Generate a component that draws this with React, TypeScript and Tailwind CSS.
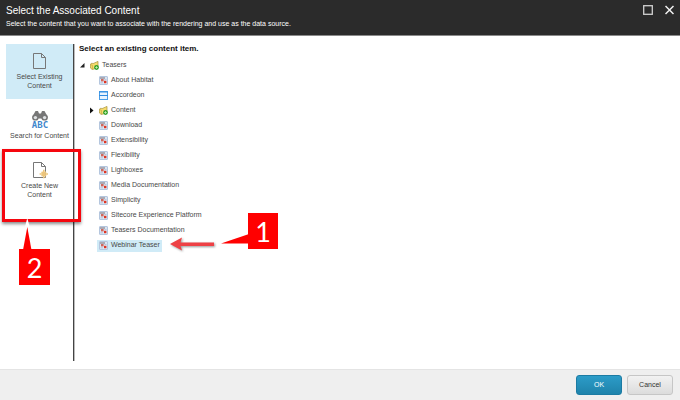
import { useState } from "react";

type IconKind = "folder" | "teaser" | "accordion";

const tabs = [
  { id: "existing", label: "Select Existing Content" },
  { id: "search", label: "Search for Content" },
  { id: "create", label: "Create New Content" },
];

const items: { name: string; icon: IconKind; hasChildren?: boolean }[] = [
  { name: "About Habitat", icon: "teaser" },
  { name: "Accordeon", icon: "accordion" },
  { name: "Content", icon: "folder", hasChildren: true },
  { name: "Download", icon: "teaser" },
  { name: "Extensibility", icon: "teaser" },
  { name: "Flexibility", icon: "teaser" },
  { name: "Lighboxes", icon: "teaser" },
  { name: "Media Documentation", icon: "teaser" },
  { name: "Simplicity", icon: "teaser" },
  { name: "Sitecore Experience Platform", icon: "teaser" },
  { name: "Teasers Documentation", icon: "teaser" },
  { name: "Webinar Teaser", icon: "teaser" },
];

function PageIcon({ starred }: { starred?: boolean }) {
  return (
    <svg width="18" height="18" viewBox="0 0 18 18" fill="none">
      <path d="M2.5 1.5h8l4 4v11h-12z" stroke="#777" />
      <path d="M10.5 1.5v4h4" stroke="#777" />
      {starred && (
        <path
          d="M12.8 8.8v8.4M8.6 13h8.4M10.6 10.8l4.4 4.4M15 10.8l-4.4 4.4"
          stroke="#ecc57c"
          strokeWidth="1.6"
        />
      )}
    </svg>
  );
}

function SearchIcon() {
  return (
    <svg width="20" height="18" viewBox="0 0 20 18">
      <g fill="#777">
        <path d="M5.5 0h2.5l1 2.5h2l1-2.5h2.5l3 5.5v2h-15v-2z" />
        <circle cx="5.4" cy="6.4" r="3.2" />
        <circle cx="14.6" cy="6.4" r="3.2" />
      </g>
      <circle cx="5.4" cy="6.6" r="1.7" fill="#dfe2e4" />
      <circle cx="14.6" cy="6.6" r="1.7" fill="#dfe2e4" />
      <text
        x="10"
        y="17"
        textAnchor="middle"
        fontFamily="DejaVu Sans Mono, monospace"
        fontWeight="bold"
        fontSize="9"
        fill="#3f86cc"
      >
        ABC
      </text>
    </svg>
  );
}

function TreeIcon({ kind }: { kind: IconKind }) {
  if (kind === "folder") {
    return (
      <svg width="9" height="9" viewBox="0 0 9 9">
        <path d="M.4 3.2L2 2l.9.7L8 .4v6L2.4 8.6.4 7z" fill="#f6dc6c" stroke="#a8913c" strokeWidth=".7" />
        <path d="M.6 3.4l1.8 1v4" fill="none" stroke="#b89b3e" strokeWidth=".6" />
        <circle cx="6.5" cy="6.5" r="2.4" fill="#2fa02a" />
        <path d="M5.2 6.5h2.6M6.5 5.2v2.6" stroke="#c9f0b8" strokeWidth=".8" />
      </svg>
    );
  }
  if (kind === "accordion") {
    return (
      <svg width="9" height="9" viewBox="0 0 9 9">
        <rect x=".5" y=".5" width="8" height="8" fill="#e8f4ff" stroke="#4a9ee8" />
        <path d="M0 1h9M0 4.5h9" stroke="#2f8be0" strokeWidth="1.2" />
      </svg>
    );
  }
  return (
    <svg width="9" height="9" viewBox="0 0 9 9">
      <rect x=".5" y=".5" width="8" height="8" rx=".5" fill="#d9e5f4" stroke="#b4c6de" />
      <path d="M1 2h5" stroke="#7d6f74" />
      <path d="M1.5 6.8h2.5M5.5 3.5h2" stroke="#b3bfd0" strokeWidth=".8" />
      <rect x="2" y="3" width="2.6" height="2.4" fill="#d0685c" />
      <rect x="5" y="4.8" width="2.4" height="2.4" fill="#de3524" />
    </svg>
  );
}

export default function App() {
  const [tab, setTab] = useState("existing");
  const [selected, setSelected] = useState("Webinar Teaser");

  return (
    <div className="relative flex min-h-screen flex-col bg-white font-['Liberation_Sans',Arial,sans-serif] text-[7px] text-[#484848]">
      <header className="flex items-start justify-between border-b border-[#8a8a8a] bg-[#2b2b2b] px-1.5 pt-1 pb-[5px] text-white">
        <div>
          <h1 className="text-[10px] leading-[13px]">Select the Associated Content</h1>
          <p className="text-[7px] leading-[13px]">
            Select the content that you want to associate with the rendering and use as the data source.
          </p>
        </div>
        <div className="flex gap-3 pt-px">
          <button aria-label="Maximize">
            <svg width="10" height="10" viewBox="0 0 10 10" fill="none">
              <rect x=".7" y=".7" width="8.6" height="8.6" stroke="#d0d0d0" strokeWidth="1.3" />
            </svg>
          </button>
          <button aria-label="Close">
            <svg width="9" height="10" viewBox="0 0 9 10" fill="none">
              <path d="M.5 1l8 8M8.5 1l-8 8" stroke="#f2f2f2" strokeWidth="1.5" />
            </svg>
          </button>
        </div>
      </header>

      <main className="flex flex-1 pt-2 pb-2 pl-1.5">
        <nav className="flex w-17 shrink-0 flex-col gap-1 border-r border-[#444] shadow-[1px_0_0_#bbb]">
          {tabs.map((t) => (
            <button
              key={t.id}
              onClick={() => setTab(t.id)}
              className={`flex flex-col items-center pt-2 pb-[9px] leading-[9px] ${
                tab === t.id ? "bg-[#d0ebf7]" : ""
              }`}
            >
              <span className="flex h-5 items-start">
                {t.id === "search" ? <SearchIcon /> : <PageIcon starred={t.id === "create"} />}
              </span>
              <span className={t.id === "search" ? "whitespace-nowrap" : "w-13"}>{t.label}</span>
            </button>
          ))}
        </nav>

        <section className="flex-1 pl-[5px]">
          <h2 className="text-[8px] leading-[10px] font-bold text-[#111]">Select an existing content item.</h2>
          <div className="pt-1">
            <div className="flex h-[15px] items-center gap-[3px]">
              <svg width="7" height="7" viewBox="0 0 7 7">
                <path d="M5.5 1v4.5H1z" fill="#222" />
              </svg>
              <span className="flex items-center gap-[3px] pl-px">
                <TreeIcon kind="folder" />
                Teasers
              </span>
            </div>
            <ul className="pl-[9px]">
              {items.map((item) => (
                <li key={item.name} className="flex h-[15px] items-center">
                  <span className="w-[9px]">
                    {item.hasChildren && (
                      <svg width="7" height="7" viewBox="0 0 7 7">
                        <path d="M2 .5l3.5 3L2 6.5z" fill="#111" />
                      </svg>
                    )}
                  </span>
                  <button
                    onClick={() => setSelected(item.name)}
                    className={`flex h-3 items-center gap-[3px] px-0.5 ${
                      selected === item.name ? "bg-[#d0ebf7]" : ""
                    }`}
                  >
                    <TreeIcon kind={item.icon} />
                    {item.name}
                  </button>
                </li>
              ))}
            </ul>
          </div>
        </section>
      </main>

      <footer className="flex justify-end gap-[5px] border-t border-[#e4e4e4] bg-[#efefef] px-[7px] py-[5px]">
        <button className="h-5 w-[46px] rounded-[3px] border border-[#1c7ba3] bg-linear-to-b from-[#2c9cc8] to-[#1f83ab] text-white">
          OK
        </button>
        <button className="h-5 w-[46px] rounded-[3px] border border-[#c6c6c6] bg-linear-to-b from-[#f2f2f2] to-[#dcdcdc] text-[#333]">
          Cancel
        </button>
      </footer>

      {/* step 2: frame round the "Create New" tab */}
      <div className="pointer-events-none absolute top-[149px] left-[2px] h-[73px] w-[79px] border-[3px] border-[#f5060e] shadow-[0_2px_3px_rgba(0,0,0,0.45)]" />
      <svg className="pointer-events-none absolute top-[217px] left-[19px]" width="31" height="33" viewBox="0 0 31 33">
        <path d="M8.3 1l3.2 12H5.2z" fill="#fff" />
        <path d="M8.3 10L12.5 33H4z" fill="#f00" />
      </svg>
      <div className="pointer-events-none absolute top-[249px] left-[19px] flex h-9 w-[31px] items-center justify-center bg-[#f00] font-['Lato',sans-serif] text-[27px] leading-none text-white">
        2
      </div>

      {/* step 1: arrow to the chosen teaser */}
      <svg className="pointer-events-none absolute top-[236px] left-[169px] drop-shadow-[1px_1px_1px_rgba(0,0,0,0.4)]" width="47" height="16" viewBox="0 0 47 16">
        <path d="M1 8L13 1.5l-1.5 5H45v3.5H11.5l1.5 4.5z" fill="#ee4145" />
      </svg>
      <svg className="pointer-events-none absolute top-[233px] left-[220px]" width="29" height="12" viewBox="0 0 29 12">
        <path d="M1 10.5L29 1v9.5z" fill="#f00" />
      </svg>
      <div className="pointer-events-none absolute top-[213px] left-[248px] flex h-9 w-[30px] items-center justify-center bg-[#f00] font-['Lato',sans-serif] text-[27px] leading-none text-white">
        1
      </div>
    </div>
  );
}
